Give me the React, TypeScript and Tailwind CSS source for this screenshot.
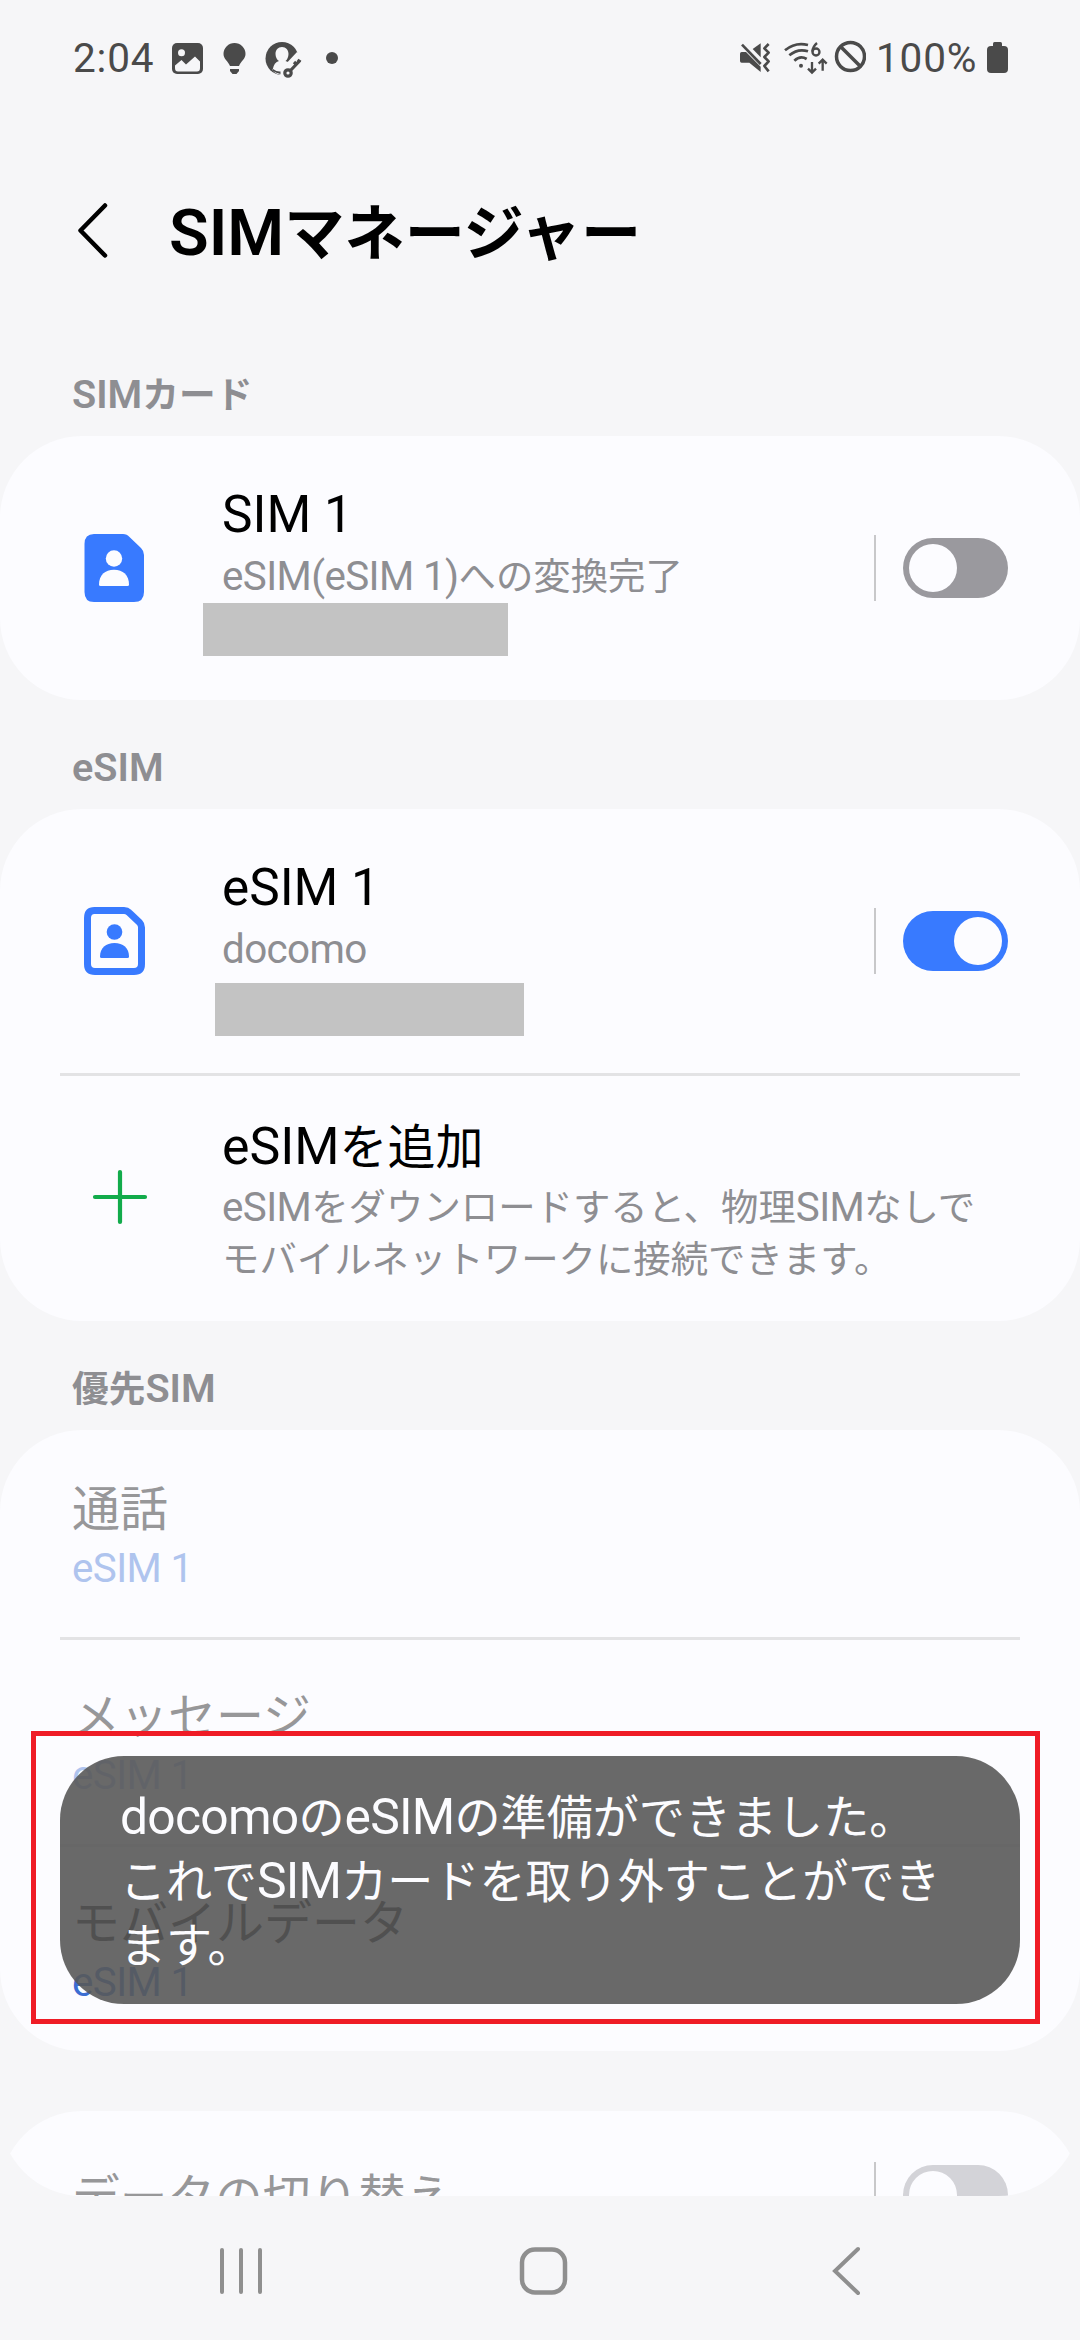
import type { ReactNode } from 'react';

const LATIN = /([A-Za-z0-9()%: ]+)/;

// Latin runs are set in Roboto, a touch larger than the Japanese around them
function Txt({ children, tight }: { children: string; tight?: boolean }) {
    return (
        <>
            {children.split(LATIN).map((part, i) =>
                i % 2 === 1 ? (
                    <span
                        key={i}
                        className={`font-['Roboto',sans-serif] text-[1.08em] leading-none ${tight ? 'tracking-[-0.015em]' : ''}`}
                    >
                        {part}
                    </span>
                ) : (
                    part
                )
            )}
        </>
    );
}

function Toggle({ on = false, disabled = false }: { on?: boolean; disabled?: boolean }) {
    const track = disabled ? 'bg-[#d3d3d8]' : on ? 'bg-[#387aff]' : 'bg-[#9a999e]';
    return (
        <div className="flex shrink-0 items-center">
            <div className="h-[66px] w-[2px] bg-[#c8c8ca]" />
            <div className={`ml-[27px] flex h-[60px] w-[105px] items-center rounded-full px-[6px] ${track} ${on ? 'justify-end' : ''}`}>
                <div className="size-12 rounded-full bg-[#fcfcff]" />
            </div>
        </div>
    );
}

function SectionTitle({ children }: { children: string }) {
    return (
        <h2 className="h-[109px] pt-[39px] pl-[72px] text-[36.7px] leading-[52px] font-semibold text-[#8e8e92]">
            <Txt>{children}</Txt>
        </h2>
    );
}

function Card({ children }: { children: ReactNode }) {
    return <section className="rounded-[82px] bg-[#fcfcff]">{children}</section>;
}

function Divider() {
    return <div className="mx-[60px] h-[3px] bg-[#e3e3e5]" />;
}

function SimRow({ icon, title, sub, bar, on }: { icon: ReactNode; title: string; sub: string; bar: ReactNode; on?: boolean }) {
    return (
        <div className="relative flex h-[264px] items-center pr-[72px] pl-[84px]">
            <div className="w-[138px]">{icon}</div>
            <div className="flex-1 self-start pt-[44px]">
                <p className="text-[47.5px] leading-[64px] text-black"><Txt>{title}</Txt></p>
                <p className="mt-1 text-[37.4px] leading-[52px] text-[#8e8e92]"><Txt tight>{sub}</Txt></p>
            </div>
            <Toggle on={on} />
            {bar}
        </div>
    );
}

function PreferredRow({ title, active, first }: { title: string; active?: boolean; first?: boolean }) {
    return (
        <div className={`pl-[72px] ${first ? 'h-[207px] pt-[43px]' : 'h-[204px] pt-[40px]'}`}>
            <p className={`text-[48px] leading-[64px] ${active ? 'text-black' : 'text-[#979799]'}`}>{title}</p>
            <p className={`mt-[3px] text-[37.4px] leading-[52px] ${active ? 'text-[#3b6dd2]' : 'text-[#afc4ee]'}`}>
                <Txt tight>eSIM 1</Txt>
            </p>
        </div>
    );
}

function SimSolid() {
    return (
        <svg width="61" height="68" viewBox="0 0 61 68">
            <path d="M10 0H39Q43 0 45.500 3L57 14Q60 17 60 21V58Q60 68 50 68H10Q0.500 68 0.500 58V10Q0.500 0 10 0Z" fill="#387aff" />
            <circle cx="30" cy="24.500" r="8.200" fill="#fcfcff" />
            <path d="M15 50.500C15 41 21 35.700 30 35.700S45 41 45 50.500Q45 52 43.500 52H16.500Q15 52 15 50.500Z" fill="#fcfcff" />
        </svg>
    );
}

function SimOutline() {
    return (
        <svg width="61" height="68" viewBox="0 0 61 68">
            <path
                d="M10.500 3.500H40Q43 3.500 45 5.500L55.500 15.500Q57.500 17.500 57.500 20.500V57Q57.500 64.500 50 64.500H11Q3.500 64.500 3.500 57V11Q3.500 3.500 10.500 3.500Z"
                fill="none"
                stroke="#387aff"
                strokeWidth="7"
            />
            <circle cx="30.500" cy="25" r="7.800" fill="#387aff" />
            <path d="M16 49.500C16 41 22 36 30.500 36S45 41 45 49.500Q45 51 43.500 51H17.500Q16 51 16 49.500Z" fill="#387aff" />
        </svg>
    );
}

function StatusBar() {
    return (
        <div className="flex h-[116px] items-start pt-[40px] pr-[72px] pl-[73px] text-[#4a4a4a]">
            <span className="w-[96px] font-['Roboto',sans-serif] text-[40.5px] leading-[36px] tracking-[0.02em]">2:04</span>
            {/* picture */}
            <svg className="w-[37px]" height="40" viewBox="0 0 37 40">
                <rect x="3" y="3" width="31" height="31" rx="5" fill="currentColor" />
                <circle cx="12.500" cy="12.800" r="3.500" fill="#f6f6f8" />
                <path d="M6 25.500L12.500 20L17 24.500L26 16.500L31 21.500V28Q31 31.500 28 31.500H9Q6 31.500 6 28Z" fill="#f6f6f8" />
            </svg>
            {/* bulb */}
            <svg className="ml-[14px]" width="30" height="40" viewBox="0 0 30 40">
                <path d="M14.500 3A11 11 0 0 1 25.500 14C25.500 19 21 21 19 26H10C8 21 3.500 19 3.500 14A11 11 0 0 1 14.500 3Z" fill="currentColor" />
                <path d="M10 29H19V31L16.500 34H12.500L10 31Z" fill="currentColor" />
            </svg>
            {/* account key */}
            <svg className="ml-[13px]" width="42" height="40" viewBox="0 0 42 40">
                <circle cx="19" cy="18.500" r="16.500" fill="currentColor" />
                <path d="M19 7C23 7 25.500 10 25.500 14C25.500 17 24 20 22.500 21Q26 22 28 24L18 35Q12 34 9.500 30Q11 22 16 21C14 20 12.500 17 12.500 14C12.500 10 15 7 19 7Z" fill="#f6f6f8" />
                <path d="M17 40L19 28L34 12L42 17V40Z" fill="#f6f6f8" />
                <path d="M10 29Q14 32 17.500 31.500V34Q13 33 10 31Z" fill="currentColor" />
                <circle cx="25" cy="33" r="3.200" fill="none" stroke="currentColor" strokeWidth="3.200" />
                <path d="M27 31L37 20.500M31 22L34 25M34.500 20L37.500 22" fill="none" stroke="currentColor" strokeWidth="3.200" />
            </svg>
            <div className="mt-[12px] ml-[21px] size-3 rounded-full bg-[#4a4a4a]" />
            <div className="ml-auto flex">
                {/* muted, vibrate */}
                <svg width="34" height="40" viewBox="108 60 102 120" fill="currentColor">
                    <path d="M119 96H132L176 140V156L142 128H119Q114 128 114 123V101Q114 96 119 96Z" />
                    <path d="M152 87L176 70V112Z" />
                    <path d="M120 74L176 132" stroke="currentColor" strokeWidth="8" />
                    <path d="M200 72L187 85L200 98L187 111L200 124L187 138L200 154" fill="none" stroke="currentColor" strokeWidth="8" strokeLinejoin="round" />
                </svg>
                {/* wifi 6 */}
                <svg className="ml-[11px]" width="46" height="40" viewBox="243 60 138 120" fill="none" stroke="currentColor">
                    <path d="M249 91Q280 65 318 75M262 106Q288 84 318 94M277 122Q295 105 314 117" strokeWidth="8" />
                    <circle cx="297" cy="137" r="6" fill="currentColor" stroke="none" />
                    <path d="M345 69Q332 80 331 95" strokeWidth="7" />
                    <circle cx="342" cy="96" r="10.500" strokeWidth="7" />
                    <path d="M330 126V158M318 146L330 158L342 146M362 152V120M350 131L362 119L374 131" strokeWidth="7" />
                </svg>
                <svg className="ml-[5px]" width="32" height="40" viewBox="0 0 32 40" fill="none" stroke="currentColor" strokeWidth="3.500">
                    <circle cx="16.500" cy="16.500" r="14" />
                    <path d="M7 7L26 26" />
                </svg>
                <span className="ml-[10px] w-[111px] font-['Roboto',sans-serif] text-[40.5px] leading-[36px] tracking-[0.02em]">100%</span>
                <svg width="21" height="40" viewBox="0 0 21 40" fill="currentColor">
                    <rect x="6" y="2" width="9" height="6" rx="1.500" />
                    <rect x="0" y="6" width="21" height="27" rx="4" />
                </svg>
            </div>
        </div>
    );
}

function NavBar() {
    return (
        <nav className="flex h-[144px] items-start pt-[50px] pl-[218px]">
            <svg width="46" height="50" viewBox="0 0 46 50" stroke="#8f8f8f" strokeWidth="4" strokeLinecap="round">
                <path d="M4 4V46M23 4V46M42 4V46" />
            </svg>
            <svg className="ml-[255px]" width="50" height="52" viewBox="0 0 50 52" fill="none" stroke="#8f8f8f" strokeWidth="4.500">
                <rect x="3" y="3.500" width="43" height="43" rx="13" />
            </svg>
            <svg className="ml-[262px]" width="32" height="52" viewBox="0 0 32 52" fill="none" stroke="#8f8f8f" strokeWidth="4" strokeLinecap="round">
                <path d="M27 3L4 25L27 47" />
            </svg>
        </nav>
    );
}

export default function App() {
    return (
        <div className="relative flex h-[2340px] w-[1080px] flex-col overflow-hidden bg-[#f6f6f8] font-['Noto_Sans_CJK_JP',sans-serif]">
            <StatusBar />
            <header className="flex h-[211px] items-start pt-[73px] pl-[76px]">
                <svg className="mt-[11px]" width="34" height="60" viewBox="0 0 34 60" fill="none" stroke="#000" strokeWidth="4.500" strokeLinecap="round" strokeLinejoin="round">
                    <path d="M29 5.500L4.500 30.500L29 55.500" />
                </svg>
                <h1 className="ml-[59px] text-[60.2px] leading-[80px] font-semibold text-black">
                    <Txt>SIMマネージャー</Txt>
                </h1>
            </header>

            <main className="h-[1869px] overflow-hidden rounded-b-[82px]">
                <SectionTitle>SIMカード</SectionTitle>
                <Card>
                    <SimRow
                        icon={<SimSolid />}
                        title="SIM 1"
                        sub="eSIM(eSIM 1)への変換完了"
                        bar={<div className="absolute top-[167px] left-[203px] h-[53px] w-[305px] bg-[#c3c3c3]" />}
                    />
                </Card>

                <SectionTitle>eSIM</SectionTitle>
                <Card>
                    <SimRow
                        icon={<SimOutline />}
                        title="eSIM 1"
                        sub="docomo"
                        bar={<div className="absolute top-[174px] left-[215px] h-[53px] w-[309px] bg-[#c3c3c3]" />}
                        on
                    />
                    <Divider />
                    <div className="flex h-[245px] items-start pl-[92px]">
                        <svg className="mt-[93px] mr-[74px] shrink-0" width="56" height="56" viewBox="0 0 56 56" stroke="#12ab4b" strokeWidth="4.200" strokeLinecap="round">
                            <path d="M28 3V53M3 28H53" />
                        </svg>
                        <div className="pt-[35px]">
                            <p className="text-[48px] leading-[64px] text-black"><Txt>eSIMを追加</Txt></p>
                            <p className="mt-1 text-[37.4px] leading-[52px] text-[#8e8e92]">
                                <Txt tight>eSIMをダウンロードすると、物理SIMなしで</Txt>
                                <br />
                                モバイルネットワークに接続できます。
                            </p>
                        </div>
                    </div>
                </Card>

                <SectionTitle>優先SIM</SectionTitle>
                <Card>
                    <PreferredRow title="通話" first />
                    <Divider />
                    <PreferredRow title="メッセージ" />
                    <Divider />
                    <PreferredRow title="モバイルデータ" active />
                </Card>

                <div className="mt-[60px]">
                    <Card>
                        <div className="flex h-[264px] items-start justify-between pt-[51px] pr-[72px] pl-[72px]">
                            <p className="text-[47.7px] leading-[64px] text-[#979799]">データの切り替え</p>
                            <Toggle disabled />
                        </div>
                    </Card>
                </div>
            </main>

            <NavBar />

            {/* toast and its highlight frame */}
            <div className="absolute top-[1731px] left-[31px] h-[293px] w-[1009px] border-[5px] border-[#ef1c26]" />
            <div className="absolute top-[1756px] left-[60px] h-[248px] w-[960px] rounded-[64px] bg-[#595959]/90 pt-[26px] pl-[60px] text-[46.1px] leading-[64px] text-[#fcfcff]">
                <Txt tight>docomoのeSIMの準備ができました。</Txt>
                <br />
                <Txt tight>これでSIMカードを取り外すことができ</Txt>
                <br />
                ます。
            </div>
        </div>
    );
}
